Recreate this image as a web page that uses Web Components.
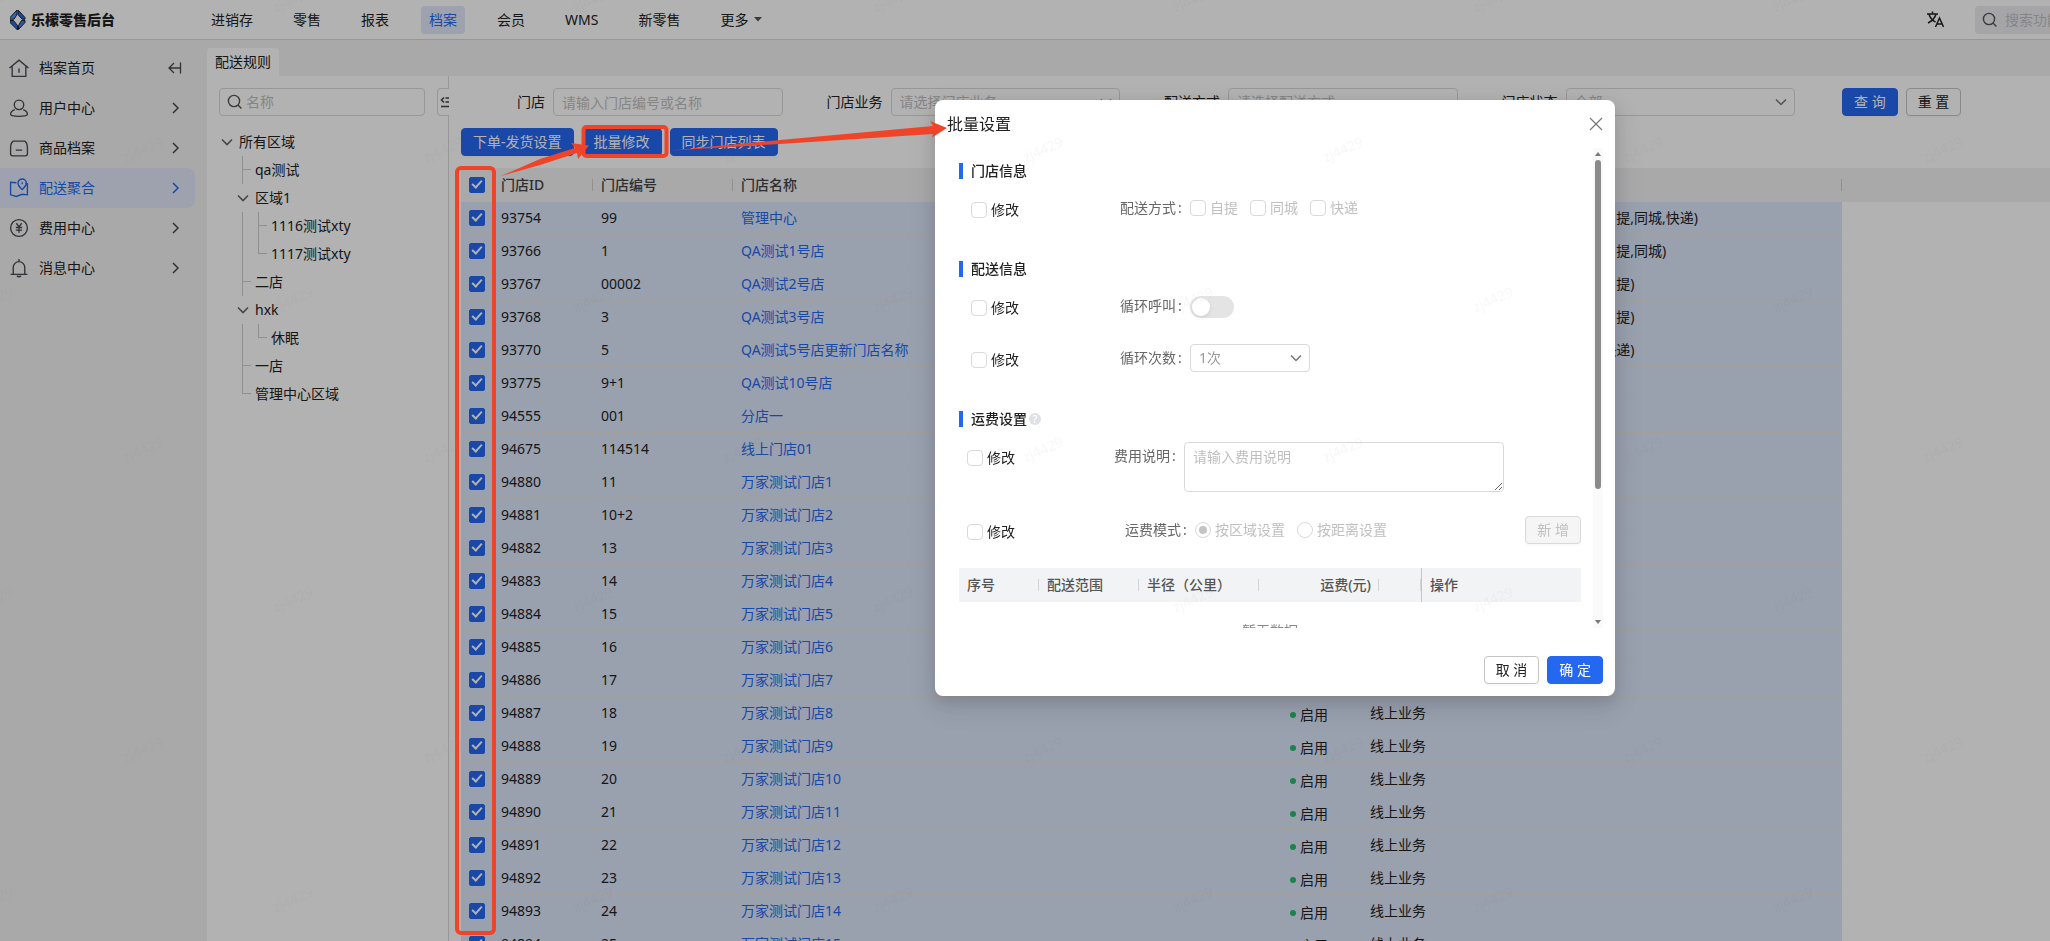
<!DOCTYPE html>
<html lang="zh-CN">
<head>
<meta charset="utf-8">
<meta name="viewport" content="width=device-width, initial-scale=1">
<title>乐檬零售后台</title>
<style>
  html, body { margin: 0; height: 100%; }
  body {
    --primary: #2468f2;
    --line: #d9d9d9;
    --gray: #f2f2f4;
    --tint: #e2e9fa;
    --hint: #bfbfbf;
    font: 14px/20px "Noto Sans", "Noto Sans CJK SC", sans-serif;
    color: #222;
    overflow: hidden;
  }
</style>
</head>
<body>
<retail-app></retail-app>

<script>
const BASE = `
  *, *::before, *::after { box-sizing: border-box; }
  button, input, select, textarea { font: inherit; color: inherit; margin: 0; }
  a { color: inherit; text-decoration: none; }
  ul { list-style: none; margin: 0; padding: 0; }
  svg { display: block; flex: none; fill: none; stroke: currentColor; }
  ::placeholder { color: var(--hint); opacity: 1; }
`;
const CHECK = `
  input[type=checkbox] {
    appearance: none; flex: none; position: relative; width: 16px; height: 16px;
    border: 1px solid var(--line); border-radius: 4px; background: #fff;
  }
  input[type=checkbox]:checked { background: var(--primary); border-color: var(--primary); border-radius: 2px; }
  input[type=checkbox]:checked::after {
    content: ""; position: absolute; left: 4px; top: 0; width: 6px; height: 10px;
    border: solid #fff; border-width: 0 2px 2px 0; transform: rotate(42deg);
  }
`;
const FIELD = `
  .field { position: relative; display: flex; align-items: center; min-width: 0; }
  .field input, .field select {
    appearance: none; width: 100%; height: 28px; padding: 0 8px; outline: 0;
    border: 1px solid var(--line); border-radius: 4px; background: #fff;
  }
  .field select { color: var(--hint); opacity: 1; }
  .field svg.arrow { position: absolute; right: 8px; color: #777; pointer-events: none; }
`;
const ARROW = `<svg class="arrow" width="12" height="12" viewBox="0 0 12 12" stroke-width="1.5" aria-hidden="true"><path d="M1 3.5 6 8.5 11 3.5"/></svg>`;
const SEARCH = `<svg width="16" height="16" viewBox="0 0 16 16" stroke-width="1.4" aria-hidden="true"><circle cx="7" cy="7" r="5.6"/><path d="m11 11 3.4 3.4"/></svg>`;

function define(name, css, html) {
  const template = document.createElement('template');
  template.innerHTML = `<style>${BASE}${css}</style>${html}`;
  customElements.define(name, class extends HTMLElement {
    constructor() {
      super();
      this.attachShadow({ mode: 'open' }).append(template.content.cloneNode(true));
    }
    connectedCallback() {
      const button = this.shadowRoot.querySelector('button[data-host]');
      if (button) button.disabled = this.hasAttribute('disabled');
    }
  });
}

define('ui-button', `
  :host { display: block; flex: none; }
  button {
    display: block; height: 28px; padding: 0 11px; border: 1px solid #c4c4c4; border-radius: 4px;
    background: #fff; color: #222; line-height: 26px; white-space: nowrap;
    box-shadow: 0 2px 0 rgba(0,0,0,.02);
  }
  :host([primary]) button { background: var(--primary); border-color: var(--primary); color: #fff; }
  button:disabled { background: #f5f5f5; border-color: var(--line); color: var(--hint); }
`, `<button type="button" data-host><slot></slot></button>`);

/* ---------- top bar ---------- */
define('app-header', `
  :host { display: flex; align-items: center; height: 40px; background: #fff; border-bottom: 1px solid var(--line); }
  .brand { display: flex; align-items: center; gap: 5px; width: 203px; padding-left: 10px; font-weight: 900; color: #222; flex: none; }
  nav { display: flex; gap: 24px; flex: 1; }
  nav a { display: flex; align-items: center; gap: 6px; height: 28px; padding: 0 8px; border-radius: 4px; }
  nav a[aria-current] { background: var(--tint); color: var(--primary); }
  .lang { border: 0; padding: 0; background: none; margin-right: 31px; }
  .search { display: flex; align-items: center; gap: 7px; width: 75px; height: 28px; padding-left: 7px; background: #ededf0; border-radius: 4px 0 0 4px; color: #555; }
  .search input { flex: 1; min-width: 0; border: 0; padding: 0; background: none; outline: 0; }
`, `
  <div class="brand">
    <svg width="16" height="20" viewBox="0 0 16 20" stroke="none" aria-hidden="true">
      <path fill="#4a90f7" d="M7 0V4.500L4 9.200H0V7.500Z"/>
      <path fill="#2468f2" d="M8 0 15 7.500V9.200H12L8 4.500Z"/>
      <path fill="#2468f2" d="M0 10.500H3.500L7.500 15.500V20L0 12.500Z"/>
      <path fill="#3d80f5" d="M15 10.500V12.500L8.500 19.500V15.500L11.500 10.500Z"/>
    </svg>
    <span>乐檬零售后台</span>
  </div>
  <nav>
    <a href="#">进销存</a><a href="#">零售</a><a href="#">报表</a><a href="#" aria-current="page">档案</a>
    <a href="#">会员</a><a href="#">WMS</a><a href="#">新零售</a>
    <a href="#">更多<svg width="8" height="5" viewBox="0 0 8 5" aria-hidden="true"><path d="M0 0h8L4 4.500z" fill="#555" stroke="none"/></svg></a>
  </nav>
  <button class="lang" type="button" aria-label="切换语言">
    <svg width="17" height="17" viewBox="0 0 17 17" stroke="#333" stroke-width="1.5"><path d="M0 3h11M5.500.500V3M2 3c1 4 3.500 6.500 6.500 8M9 3c-1 4-4 7-8 9M8.500 16 12.500 7l4 9M10 13h5"/></svg>
  </button>
  <label class="search">${SEARCH}<input type="text" placeholder="搜索功能" aria-label="搜索功能"></label>
`);

/* ---------- side navigation ---------- */
const sideIcons = {
  home: '<path d="M.5 9.500 9.500 2l9 7.500M3 8v9.500h13V8M9.500 10v4"/>',
  user: '<circle cx="9.500" cy="6.500" r="4.500"/><path d="M5.500 11C3 12 1.500 14 1.500 15.500c0 1.500 3 2 8 2s8-.5 8-2c0-1.500-1.500-3.500-4-4.500"/>',
  goods: '<path d="M4 3h11c1.500 1 2.500 4 2.500 6.500V15q0 2-2 2h-12q-2 0-2-2V9.500C1.500 7 2.500 4 4 3zM6.500 11.500h6"/>',
  map: '<path d="M7 4.500 1.500 4v12l5.500 1.500 5.500-2 5 .5V5.500l-2-.500M12.500 11c-2-2-4-3.500-4-6a4 4 0 0 1 8 0c0 2.500-2 4-4 6zM12.500 4v2"/>',
  money: '<circle cx="9.500" cy="9.500" r="8"/><path d="m7 5 2.500 3.500L12 5M6.500 9h6M6.500 11.500h6M9.500 9v5"/>',
  bell: '<path d="M9.500 1v2M4 15V9a5.500 5.500 0 0 1 11 0v6M1.500 15.500h16M7.500 17q2 1.500 4 0"/>'
};
const sideItems = [['档案首页', 'home'], ['用户中心', 'user'], ['商品档案', 'goods'], ['配送聚合', 'map'], ['费用中心', 'money'], ['消息中心', 'bell']];
define('side-nav', `
  :host { display: block; flex: none; width: 207px; padding-top: 8px; background: var(--gray); }
  a { display: flex; align-items: center; gap: 10px; width: 195px; height: 40px; padding: 0 13px 0 9px; }
  a span { flex: 1; }
  svg { color: #4a4a4f; }
  a[aria-current] { background: var(--tint); border-radius: 0 8px 8px 0; color: var(--primary); }
  a[aria-current] svg { color: var(--primary); }
`, `<nav aria-label="档案">${sideItems.map(([text, icon], i) => `
  <a href="#"${i === 3 ? ' aria-current="page"' : ''}>
    <svg width="20" height="20" viewBox="0 0 19 19" stroke-width="1.3" aria-hidden="true">${sideIcons[icon]}</svg>
    <span>${text}</span>
    ${i === 0
      ? '<svg width="14" height="14" viewBox="0 0 14 14" stroke-width="1.3" aria-hidden="true"><path d="M12.500 1.500v11M1 7h11.500M6 2 1 7l5 5"/></svg>'
      : '<svg width="14" height="14" viewBox="0 0 14 14" stroke-width="1.5" aria-hidden="true"><path d="m5 2 5 5-5 5"/></svg>'}
  </a>`).join('')}</nav>`);

/* ---------- region tree: each row lists its guide units, then its label ---------- */
const regions = [
  ['open', '所有区域'], ['gap tee', 'qa测试'], ['gap open', '区域1'],
  ['gap bar tee', '1116测试xty'], ['gap bar end', '1117测试xty'], ['gap tee', '二店'],
  ['gap open', 'hxk'], ['gap bar end', '休眠'], ['gap tee', '一店'], ['gap end', '管理中心区域']
];
define('region-tree', `
  :host { position: relative; display: block; flex: none; width: 242px; padding: 12px; border-right: 1px solid var(--line); background: #fff; }
  .box { display: flex; align-items: center; gap: 3px; width: 206px; height: 28px; padding: 0 7px; border: 1px solid var(--line); border-radius: 4px; color: #555; }
  .box input { flex: 1; min-width: 0; padding: 0; border: 0; outline: 0; background: none; }
  .fold { position: absolute; right: -1px; top: 12px; width: 12px; height: 28px; padding: 0 0 0 2px; overflow: hidden; background: #fff; border: 1px solid var(--line); border-right: 0; border-radius: 4px 0 0 4px; color: #444; }
  ul { margin-top: 12px; }
  li { display: flex; height: 28px; }
  i { display: flex; align-items: center; justify-content: center; width: 16px; color: #666; background-repeat: no-repeat; --c: linear-gradient(#cdcdcd, #cdcdcd); }
  .bar { background-image: var(--c); background-position: 7px 0; background-size: 1px 100%; }
  .tee { background-image: var(--c), var(--c); background-position: 7px 0, 7px 13px; background-size: 1px 100%, 9px 1px; }
  .end { background-image: var(--c), var(--c); background-position: 7px 0, 7px 13px; background-size: 1px 14px, 9px 1px; }
  span { padding-left: 4px; line-height: 28px; }
`, `
  <label class="box">${SEARCH}<input type="text" placeholder="名称" aria-label="名称"></label>
  <button class="fold" type="button" aria-label="收起"><svg width="14" height="12" viewBox="0 0 14 12" stroke-width="1.5" aria-hidden="true"><path d="M4 1.500 1.500 4 4 6.500M5.500 2H14M5.500 6H14M1 10.500h13"/></svg></button>
  <ul>${regions.map(([units, text]) => `<li>${units.split(' ').map(u =>
    `<i class="${u}">${u === 'open' ? '<svg width="12" height="12" viewBox="0 0 12 12" stroke-width="1.6" aria-hidden="true"><path d="M1 3.500 6 8.500 11 3.500"/></svg>' : ''}</i>`).join('')}<span>${text}</span></li>`).join('')}</ul>
`);

/* ---------- filters ---------- */
define('filter-bar', `${FIELD}
  :host { display: grid; grid-template-columns: repeat(4, minmax(0, 1fr)) 227px; }
  .cell { display: grid; grid-template-columns: 84px minmax(0, 1fr); column-gap: 8px; align-items: center; padding-right: 16px; }
  .cell > label { text-align: right; }
  .go { display: flex; gap: 8px; padding-left: 31px; }
`, `
  <div class="cell"><label for="store">门店</label><div class="field"><input id="store" type="text" placeholder="请输入门店编号或名称"></div></div>
  <div class="cell"><label for="biz">门店业务</label><div class="field"><select id="biz"><option>请选择门店业务</option></select>${ARROW}</div></div>
  <div class="cell"><label for="way">配送方式</label><div class="field"><select id="way"><option>请选择配送方式</option></select></div></div>
  <div class="cell"><label for="state">门店状态</label><div class="field"><select id="state"><option>全部</option></select>${ARROW}</div></div>
  <div class="go"><ui-button primary>查 询</ui-button><ui-button>重 置</ui-button></div>
`);

/* ---------- store table ---------- */
const stores = [
  ['93754', '99', '管理中心', '线上业务(自提,同城,快递)'],
  ['93766', '1', 'QA测试1号店', '线上业务(自提,同城)'],
  ['93767', '00002', 'QA测试2号店', '线上业务(自提)'],
  ['93768', '3', 'QA测试3号店', '线上业务(自提)'],
  ['93770', '5', 'QA测试5号店更新门店名称', '线上业务(快递)'],
  ['93775', '9+1', 'QA测试10号店', ''],
  ['94555', '001', '分店一', ''],
  ['94675', '114514', '线上门店01', '']
];
for (let n = 1; n <= 15; n++) stores.push([String(94879 + n), n === 2 ? '10+2' : String(10 + n), '万家测试门店' + n, '']);
define('store-table', `${CHECK}
  :host { display: block; overflow: hidden; }
  table { width: 100%; border-collapse: separate; border-spacing: 0; table-layout: fixed; text-align: left; }
  th { position: relative; height: 34px; padding: 0 8px; background: var(--gray); font-weight: 500; color: #444; }
  th:not(:first-child):not(:last-child)::after { content: ""; position: absolute; right: 0; top: 11px; width: 1px; height: 12px; background: #cfcfcf; }
  td { height: 33px; padding: 0 8px; background: #dce6fa; border-bottom: 1px solid #e6e4e2; white-space: nowrap; }
  td:last-child { background: #fff; border-color: #fff; }
  td a { color: var(--primary); }
  input { display: block; }
  .on { display: flex; align-items: center; gap: 4px; padding-top: 3px; }
  .on::before { content: ""; width: 6px; height: 6px; border-radius: 50%; background: #22bf6c; }
`, `
  <table>
    <colgroup><col style="width:32px"><col style="width:100px"><col style="width:140px"><col style="width:549px"><col style="width:80px"><col style="width:172px"><col style="width:308px"><col></colgroup>
    <thead><tr><th><input type="checkbox" checked aria-label="全选"></th><th>门店ID</th><th>门店编号</th><th>门店名称</th><th></th><th></th><th></th><th></th></tr></thead>
    <tbody>${stores.map(([id, no, name, way]) => `<tr>
      <td><input type="checkbox" checked aria-label="${name}"></td><td>${id}</td><td>${no}</td>
      <td><a href="#">${name}</a></td><td><span class="on">启用</span></td><td>线上业务</td><td>${way}</td><td></td></tr>`).join('')}
    </tbody>
  </table>
`);

/* ---------- batch dialog ---------- */
define('form-section', `
  :host { display: block; margin-top: 32px; }
  :host([first]) { margin-top: 0; }
  h3 { display: flex; align-items: center; height: 22px; margin: 0; font-size: 14px; font-weight: 500; color: #222; }
  h3::before { content: ""; width: 4px; height: 16px; margin-right: 8px; background: var(--primary); }
`, `<h3><slot name="title"></slot></h3><slot></slot>`);

define('batch-dialog', `${CHECK}${FIELD}
  :host { display: flex; justify-content: center; align-items: flex-start; position: fixed; inset: 0; padding: 100px 0 0 500px; background: rgba(0,0,0,.3); }
  section { width: 680px; background: #fff; border-radius: 8px; box-shadow: 0 6px 16px rgba(0,0,0,.12), 0 9px 28px 8px rgba(0,0,0,.08); }
  header { display: flex; align-items: center; justify-content: space-between; height: 48px; padding: 0 12px; }
  h2 { margin: 0; font-size: 16px; line-height: 24px; font-weight: 400; }
  header button { padding: 0; border: 0; background: none; color: #777; }
  .scroll { display: flex; height: 480px; padding: 0 12px 0 24px; overflow: hidden; }
  .body { flex: 1; min-width: 0; padding: 12px 12px 0 0; }
  .bar { display: flex; flex-direction: column; align-items: center; justify-content: space-between; width: 10px; background: #fafafa; padding: 4px 0; }
  .bar svg { fill: #777; stroke: none; }
  .thumb { flex: none; width: 6px; height: 329px; margin: 4px 0 auto; border-radius: 3px; background: #8b8b8b; }
  .row { display: flex; align-items: flex-start; margin: 12px 0 0 12px; }
  .row.next { margin-top: 20px; }
  .row.wide { margin-left: 8px; }
  .wide.next { margin-top: 24px; }
  .pick { display: flex; align-items: center; gap: 4px; height: 32px; width: 149px; flex: none; }
  .wide .pick { width: 147px; }
  .mode .pick { width: 158px; }
  .name { width: 70px; line-height: 28px; color: #666; flex: none; }
  .name::after { content: ":"; margin-left: 2px; }
  .opts { display: flex; gap: 12px; height: 28px; color: var(--hint); flex: 1; }
  .opts label { display: flex; align-items: center; gap: 4px; }
  input[type=radio] { appearance: none; width: 16px; height: 16px; border: 1px solid var(--line); border-radius: 50%; display: grid; place-items: center; background: #fff; }
  input[type=radio]:checked::after { content: ""; width: 8px; height: 8px; border-radius: 50%; background: #c4c4c4; }
  .row input.switch { width: 44px; height: 22px; margin-top: 4px; padding: 2px; border: 0; border-radius: 11px; background: #e4e4e4; }
  .switch::after { content: ""; display: block; width: 18px; height: 18px; border-radius: 50%; background: #fff; box-shadow: 0 2px 4px rgba(0,0,0,.08); }
  .field { width: 120px; }
  .field select { color: #999; }
  textarea { display: block; width: 320px; height: 50px; padding: 4px 8px; border: 1px solid var(--line); border-radius: 4px; outline: 0; background: #fff; }
  .help { width: 12px; height: 12px; margin-left: 2px; border-radius: 50%; background: #dfe1e7; color: #fff; font-size: 10px; line-height: 12px; text-align: center; }
  table { width: 100%; margin-top: 20px; border-spacing: 0; table-layout: fixed; text-align: left; }
  th { position: relative; height: 34px; padding: 0 8px; background: #f2f3f5; font-weight: 500; color: #555; white-space: nowrap; }
  th:not(:last-child)::after { content: ""; position: absolute; right: 0; top: 11px; width: 1px; height: 12px; background: #d4d4d4; }
  th.num { text-align: right; }
  th.op { border-left: 1px solid #c4c6ca; }
  td { height: 58px; text-align: center; color: #888; }
  footer { display: flex; justify-content: flex-end; gap: 8px; padding: 28px 12px 12px; }
`, `
  <section role="dialog" aria-labelledby="title">
    <header>
      <h2 id="title">批量设置</h2>
      <button type="button" aria-label="关闭"><svg width="14" height="14" viewBox="0 0 14 14" stroke-width="1.2"><path d="m1 1 12 12M13 1 1 13"/></svg></button>
    </header>
    <div class="scroll">
      <div class="body">
        <form-section first>
          <span slot="title">门店信息</span>
          <div class="row">
            <label class="pick"><input type="checkbox">修改</label>
            <span class="name">配送方式</span>
            <div class="opts"><label><input type="checkbox" disabled>自提</label><label><input type="checkbox" disabled>同城</label><label><input type="checkbox" disabled>快递</label></div>
          </div>
        </form-section>
        <form-section>
          <span slot="title">配送信息</span>
          <div class="row">
            <label class="pick"><input type="checkbox">修改</label>
            <label class="name" for="loop">循环呼叫</label><input class="switch" id="loop" type="checkbox" role="switch" disabled>
          </div>
          <div class="row next">
            <label class="pick"><input type="checkbox">修改</label>
            <label class="name" for="times">循环次数</label><div class="field"><select id="times" disabled><option>1次</option></select>${ARROW}</div>
          </div>
        </form-section>
        <form-section>
          <span slot="title">运费设置</span><span slot="title" class="help">?</span>
          <div class="row wide">
            <label class="pick"><input type="checkbox">修改</label>
            <label class="name" for="note">费用说明</label><textarea id="note" placeholder="请输入费用说明"></textarea>
          </div>
          <div class="row wide next mode">
            <label class="pick"><input type="checkbox">修改</label>
            <span class="name">运费模式</span>
            <div class="opts"><label><input type="radio" name="mode" checked disabled>按区域设置</label><label><input type="radio" name="mode" disabled>按距离设置</label></div>
            <ui-button disabled>新 增</ui-button>
          </div>
          <table>
            <colgroup><col style="width:80px"><col style="width:100px"><col style="width:120px"><col style="width:120px"><col style="width:42px"><col></colgroup>
            <thead><tr><th>序号</th><th>配送范围</th><th>半径（公里）</th><th class="num">运费(元)</th><th></th><th class="op">操作</th></tr></thead>
            <tbody><tr><td colspan="6">暂无数据</td></tr></tbody>
          </table>
        </form-section>
      </div>
      <div class="bar" aria-hidden="true">
        <svg width="6" height="4" viewBox="0 0 6 4"><path d="M0 4 3 0l3 4z"/></svg>
        <div class="thumb"></div>
        <svg width="6" height="4" viewBox="0 0 6 4"><path d="M0 0h6L3 4z"/></svg>
      </div>
    </div>
    <footer><ui-button>取 消</ui-button><ui-button primary>确 定</ui-button></footer>
  </section>
`);

/* ---------- hand-drawn guidance marks over the page ---------- */
define('guide-marks', `
  :host { position: fixed; inset: 0; pointer-events: none; color: #f04428; }
`, `
  <svg width="100%" height="100%" aria-hidden="true" stroke-width="4">
    <rect x="457" y="168" width="37" height="765" rx="4"/>
    <rect x="583.500" y="127" width="83" height="29" rx="3"/>
    <g fill="currentColor" stroke="none">
      <path d="M501 176 540 159 575 148 571 143 589 145.500 578 159 577 153 540 165Z"/>
      <path d="M671 150.500 780 140 933 126 930 121 947 128 932 137.500 933 134 780 144Z"/>
    </g>
  </svg>
`);

define('water-mark', `
  :host { position: fixed; inset: 0; pointer-events: none; }
  text { font-size: 14px; fill: #777; fill-opacity: .06; stroke: none; text-anchor: middle; }
`, `
  <svg width="100%" height="100%" aria-hidden="true">
    <pattern id="tile" width="300" height="300" patternUnits="userSpaceOnUse" patternTransform="translate(70 75)">
      <text transform="translate(75 79) rotate(-24)">zj4429</text>
      <text transform="translate(225 229) rotate(-24)">zj4429</text>
    </pattern>
    <rect width="100%" height="100%" fill="url(#tile)" stroke="none"/>
  </svg>
`);

/* ---------- shell ---------- */
define('retail-app', `
  :host { display: flex; flex-direction: column; height: 100vh; overflow: hidden; background: var(--gray); }
  .frame { flex: 1; display: flex; min-height: 0; }
  .work { flex: 1; min-width: 0; display: flex; flex-direction: column; }
  .tabs { display: flex; padding-top: 8px; flex: none; }
  .tabs a { padding: 0 8px; line-height: 28px; background: #fff; border-radius: 4px 4px 0 0; }
  .panes { flex: 1; display: flex; min-height: 0; background: #fff; }
  main { flex: 1; min-width: 0; padding: 12px 0 0 12px; }
  filter-bar { margin-right: 12px; }
  .actions { display: flex; gap: 8px; margin: 12px 0; }
`, `
  <app-header></app-header>
  <div class="frame">
    <side-nav></side-nav>
    <div class="work">
      <div class="tabs"><a href="#">配送规则</a></div>
      <div class="panes">
        <region-tree></region-tree>
        <main>
          <filter-bar></filter-bar>
          <div class="actions"><ui-button primary>下单-发货设置</ui-button><ui-button primary>批量修改</ui-button><ui-button primary>同步门店列表</ui-button></div>
          <store-table></store-table>
        </main>
      </div>
    </div>
  </div>
  <batch-dialog></batch-dialog>
  <guide-marks></guide-marks>
  <water-mark></water-mark>
`);
</script>
</body>
</html>
